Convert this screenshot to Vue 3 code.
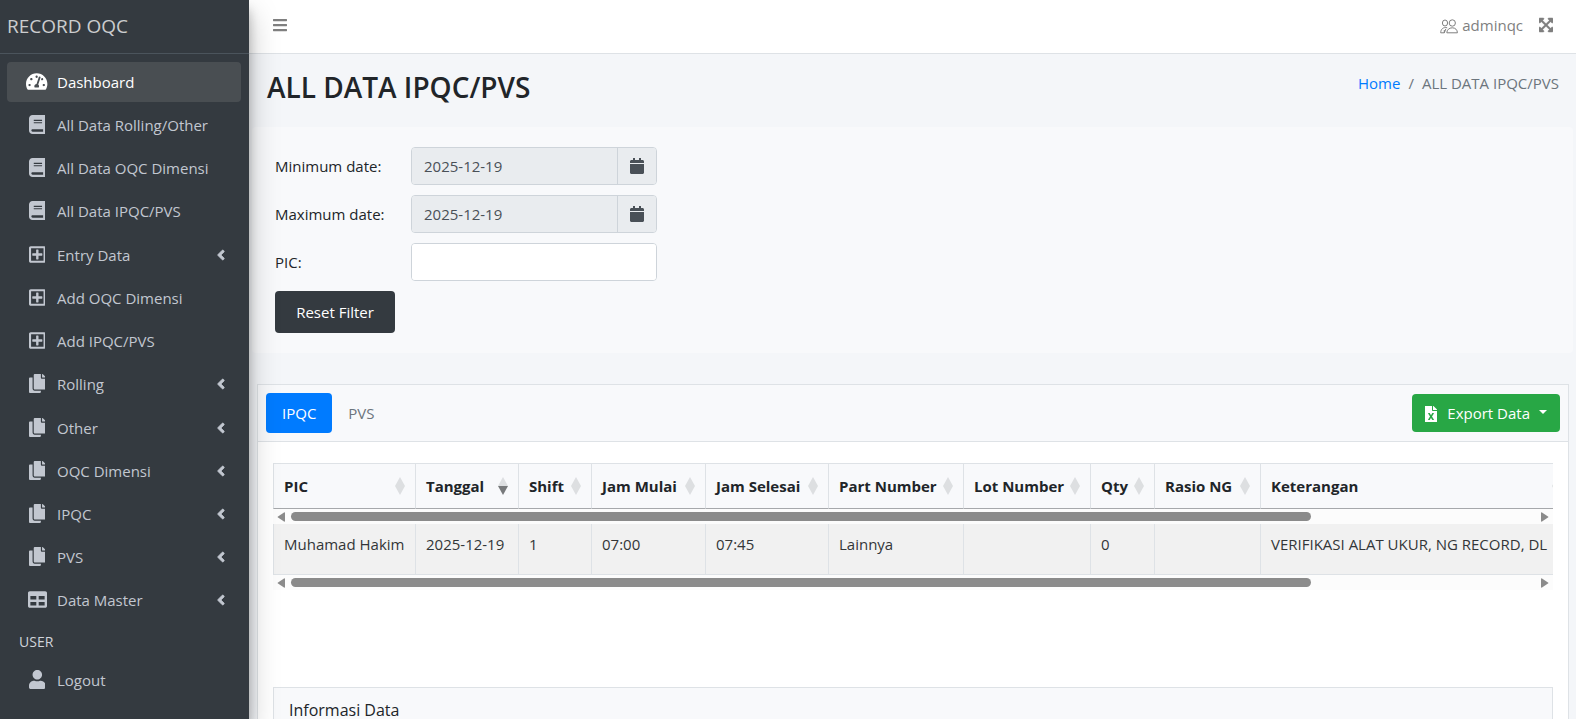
<script setup>
import { ref } from 'vue';

// Glyphs: viewBox width and path, all 512 high
const icons = {
    gauge: [576, 'M288 32C128.94 32 0 160.94 0 320c0 52.8 14.25 102.26 39.06 144.8 5.61 9.62 16.3 15.2 27.44 15.2h443c11.14 0 21.83-5.58 27.44-15.2C561.75 422.26 576 372.8 576 320c0-159.06-128.94-288-288-288zm0 64c14.71 0 26.58 10.13 30.32 23.65-1.11 2.26-2.64 4.23-3.45 6.67l-9.22 27.67c-5.13 3.49-10.97 6.01-17.64 6.01-17.67 0-32-14.33-32-32S270.33 96 288 96zM96 384c-17.67 0-32-14.33-32-32s14.33-32 32-32 32 14.33 32 32-14.33 32-32 32zm48-160c-17.67 0-32-14.33-32-32s14.33-32 32-32 32 14.33 32 32-14.33 32-32 32zm246.77-72.41l-61.33 184C343.13 347.33 352 364.54 352 384c0 11.72-3.38 22.55-8.88 32H232.88c-5.5-9.45-8.88-20.28-8.88-32 0-33.94 26.5-61.43 59.9-63.59l61.34-184.01c4.17-12.56 17.73-19.45 30.36-15.17 12.57 4.19 19.35 17.79 15.17 30.36zm14.66 57.2l15.52-46.55c3.47-1.29 7.13-2.23 11.05-2.23 17.67 0 32 14.33 32 32s-14.33 32-32 32c-11.38-.01-20.89-6.28-26.57-15.22zM480 384c-17.67 0-32-14.33-32-32s14.33-32 32-32 32 14.33 32 32-14.33 32-32 32z'],
    book: [448, 'M448 360V24c0-13.3-10.7-24-24-24H96C43 0 0 43 0 96v320c0 53 43 96 96 96h328c13.3 0 24-10.7 24-24v-16c0-7.5-3.5-14.3-8.9-18.7-4.2-15.4-4.2-59.3 0-74.7 5.4-4.3 8.9-11.1 8.9-18.6zM128 134c0-3.3 2.7-6 6-6h212c3.3 0 6 2.7 6 6v20c0 3.3-2.7 6-6 6H134c-3.3 0-6-2.7-6-6v-20zm0 64c0-3.3 2.7-6 6-6h212c3.3 0 6 2.7 6 6v20c0 3.3-2.7 6-6 6H134c-3.3 0-6-2.7-6-6v-20zm253.4 250H96c-17.7 0-32-14.3-32-32 0-17.6 14.4-32 32-32h285.4c-1.9 17.1-1.9 46.9 0 64z'],
    plus: [448, 'M360 236v40c0 6.6-5.4 12-12 12h-92v92c0 6.6-5.4 12-12 12h-40c-6.6 0-12-5.4-12-12v-92h-92c-6.6 0-12-5.4-12-12v-40c0-6.6 5.4-12 12-12h92v-92c0-6.6 5.4-12 12-12h40c6.6 0 12 5.4 12 12v92h92c6.6 0 12 5.4 12 12zM448 80v352c0 26.5-21.5 48-48 48H48c-26.5 0-48-21.5-48-48V80c0-26.5 21.5-48 48-48h352c26.5 0 48 21.5 48 48zm-56 338V94c0-3.3-2.7-6-6-6H62c-3.3 0-6 2.7-6 6v324c0 3.3 2.7 6 6 6h324c3.3 0 6-2.7 6-6z'],
    copy: [448, 'M320 448v40c0 13.255-10.745 24-24 24H24c-13.255 0-24-10.745-24-24V120c0-13.255 10.745-24 24-24h72v296c0 30.879 25.121 56 56 56h168zm0-344V0H152c-13.255 0-24 10.745-24 24v368c0 13.255 10.745 24 24 24h272c13.255 0 24-10.745 24-24V128H344c-13.2 0-24-10.8-24-24zm120.971-31.029L375.029 7.029A24 24 0 0 0 358.059 0H352v96h96v-6.059a24 24 0 0 0-7.029-16.97z'],
    table: [512, 'M464 32H48C21.49 32 0 53.49 0 80v352c0 26.51 21.49 48 48 48h416c26.51 0 48-21.49 48-48V80c0-26.51-21.49-48-48-48zM224 416H64v-96h160v96zm0-160H64v-96h160v96zm224 160H288v-96h160v96zm0-160H288v-96h160v96z'],
    user: [448, 'M224 256c70.7 0 128-57.3 128-128S294.7 0 224 0 96 57.3 96 128s57.3 128 128 128zm89.6 32h-16.7c-22.2 10.2-46.9 16-72.9 16s-50.6-5.8-72.9-16h-16.7C60.2 288 0 348.2 0 422.4V464c0 26.5 21.5 48 48 48h352c26.5 0 48-21.5 48-48v-41.6c0-74.2-60.2-134.4-134.4-134.4z'],
};

const menu = [
    [
        { label: 'Dashboard', icon: 'gauge', active: true },
        { label: 'All Data Rolling/Other', icon: 'book' },
        { label: 'All Data OQC Dimensi', icon: 'book' },
        { label: 'All Data IPQC/PVS', icon: 'book' },
    ],
    [
        { label: 'Entry Data', icon: 'plus', children: true },
        { label: 'Add OQC Dimensi', icon: 'plus' },
        { label: 'Add IPQC/PVS', icon: 'plus' },
        { label: 'Rolling', icon: 'copy', children: true },
    ],
    [
        { label: 'Other', icon: 'copy', children: true },
        { label: 'OQC Dimensi', icon: 'copy', children: true },
        { label: 'IPQC', icon: 'copy', children: true },
        { label: 'PVS', icon: 'copy', children: true },
        { label: 'Data Master', icon: 'table', children: true },
    ],
];

const columns = [
    { title: 'PIC', width: 143 },
    { title: 'Tanggal', width: 103, sorted: true },
    { title: 'Shift', width: 73 },
    { title: 'Jam Mulai', width: 114 },
    { title: 'Jam Selesai', width: 123 },
    { title: 'Part Number', width: 135 },
    { title: 'Lot Number', width: 127 },
    { title: 'Qty', width: 64 },
    { title: 'Rasio NG', width: 106 },
    { title: 'Keterangan', width: 312 },
];
const tableWidth = columns.reduce((sum, col) => sum + col.width, 0);

const rows = [
    ['Muhamad Hakim', '2025-12-19', '1', '07:00', '07:45', 'Lainnya', '', '0', '', 'VERIFIKASI ALAT UKUR, NG RECORD, DL'],
];

const minDate = ref('2025-12-19');
const maxDate = ref('2025-12-19');
const pic = ref('');
const tab = ref('IPQC');

const resetFilter = () => {
    pic.value = '';
};
</script>

<template>
    <div class="wrapper">
        <aside class="sidebar">
            <a href="#" class="brand">RECORD OQC</a>
            <nav class="menu">
                <ul v-for="(group, i) in menu" :key="i">
                    <li v-for="item in group" :key="item.label">
                        <a href="#" class="nav_item" :class="{ active: item.active }">
                            <span class="nav_icon">
                                <svg :viewBox="`0 0 ${icons[item.icon][0]} 512`"><path :d="icons[item.icon][1]" /></svg>
                            </span>
                            <span class="nav_label">{{ item.label }}</span>
                            <svg v-if="item.children" class="angle" viewBox="0 0 256 512"><path d="M31.7 239l136-136c9.4-9.4 24.6-9.4 33.9 0l22.6 22.6c9.4 9.4 9.4 24.6 0 33.9L127.9 256l96.4 96.4c9.4 9.4 9.4 24.6 0 33.9L201.7 409c-9.4 9.4-24.6 9.4-33.9 0l-136-136c-9.5-9.4-9.5-24.6-.1-34z" /></svg>
                        </a>
                    </li>
                </ul>
                <div class="nav_header">USER</div>
                <a href="#" class="nav_item">
                    <span class="nav_icon">
                        <svg viewBox="0 0 448 512"><path :d="icons.user[1]" /></svg>
                    </span>
                    <span class="nav_label">Logout</span>
                </a>
            </nav>
        </aside>

        <div class="main">
            <header class="topbar">
                <button type="button" class="icon_btn" aria-label="Toggle menu">
                    <svg class="glyph" viewBox="0 0 448 512"><path d="M16 132h416c8.837 0 16-7.163 16-16V76c0-8.837-7.163-16-16-16H16C7.163 60 0 67.163 0 76v40c0 8.837 7.163 16 16 16zm0 160h416c8.837 0 16-7.163 16-16v-40c0-8.837-7.163-16-16-16H16c-8.837 0-16 7.163-16 16v40c0 8.837 7.163 16 16 16zm0 160h416c8.837 0 16-7.163 16-16v-40c0-8.837-7.163-16-16-16H16c-8.837 0-16 7.163-16 16v40c0 8.837 7.163 16 16 16z" /></svg>
                </button>
                <div class="topbar_right">
                    <a href="#" class="account">
                        <svg class="people" viewBox="0 0 18 15">
                            <ellipse cx="5" cy="4" rx="2.6" ry="3" />
                            <ellipse cx="12.3" cy="4" rx="3.1" ry="3.2" />
                            <path d="M6.8 13.8c0-3 2.5-5 5.5-5s5.1 2 5.1 5z" />
                            <path d="M7.2 8.8C3.5 7.8.7 10 .7 13.8h3.6l1.5-3.8M4.3 13.8V11" />
                        </svg>
                        adminqc
                    </a>
                    <button type="button" class="icon_btn" aria-label="Fullscreen">
                        <svg class="glyph heavy" viewBox="0 0 448 512"><path d="M448 344v112a23.94 23.94 0 0 1-24 24H312c-21.39 0-32.09-25.9-17-41l36.2-36.2L224 295.6 116.77 402.9 153 439c15.09 15.1 4.39 41-17 41H24a23.94 23.94 0 0 1-24-24V344c0-21.4 25.89-32.1 41-17l36.19 36.2L184.46 256 77.18 148.7 41 185c-15.1 15.1-41 4.4-41-17V56a23.94 23.94 0 0 1 24-24h112c21.39 0 32.09 25.9 17 41l-36.2 36.2L224 216.4l107.23-107.3L295 73c-15.09-15.1-4.39-41 17-41h112a23.94 23.94 0 0 1 24 24v112c0 21.4-25.89 32.1-41 17l-36.19-36.2L263.54 256l107.28 107.3L407 327.1c15.1-15.2 41-4.5 41 16.9z" /></svg>
                    </button>
                </div>
            </header>

            <div class="page_head">
                <h1>ALL DATA IPQC/PVS</h1>
                <nav class="crumbs">
                    <a href="#">Home</a>
                    <span>/</span>
                    <span>ALL DATA IPQC/PVS</span>
                </nav>
            </div>

            <form class="filter" @submit.prevent>
                <label for="min">Minimum date:</label>
                <div class="group">
                    <input id="min" v-model="minDate" type="text" readonly>
                    <button type="button" aria-label="Pick minimum date">
                        <svg viewBox="0 0 448 512"><path d="M12 192h424c6.6 0 12 5.4 12 12v260c0 26.5-21.5 48-48 48H48c-26.5 0-48-21.5-48-48V204c0-6.6 5.4-12 12-12zm436-44v-36c0-26.5-21.5-48-48-48h-48V12c0-6.6-5.4-12-12-12h-40c-6.6 0-12 5.4-12 12v52H160V12c0-6.6-5.4-12-12-12h-40c-6.6 0-12 5.4-12 12v52H48C21.5 64 0 85.5 0 112v36c0 6.6 5.4 12 12 12h424c6.6 0 12-5.4 12-12z" /></svg>
                    </button>
                </div>
                <label for="max">Maximum date:</label>
                <div class="group">
                    <input id="max" v-model="maxDate" type="text" readonly>
                    <button type="button" aria-label="Pick maximum date">
                        <svg viewBox="0 0 448 512"><path d="M12 192h424c6.6 0 12 5.4 12 12v260c0 26.5-21.5 48-48 48H48c-26.5 0-48-21.5-48-48V204c0-6.6 5.4-12 12-12zm436-44v-36c0-26.5-21.5-48-48-48h-48V12c0-6.6-5.4-12-12-12h-40c-6.6 0-12 5.4-12 12v52H160V12c0-6.6-5.4-12-12-12h-40c-6.6 0-12 5.4-12 12v52H48C21.5 64 0 85.5 0 112v36c0 6.6 5.4 12 12 12h424c6.6 0 12-5.4 12-12z" /></svg>
                    </button>
                </div>
                <label for="pic">PIC:</label>
                <div class="group">
                    <input id="pic" v-model="pic" type="text">
                </div>
                <button type="button" class="reset" @click="resetFilter">Reset Filter</button>
            </form>

            <section class="card">
                <div class="card_head">
                    <div class="tabs">
                        <button v-for="name in ['IPQC', 'PVS']" :key="name" type="button" :class="{ active: tab === name }" @click="tab = name">{{ name }}</button>
                    </div>
                    <button type="button" class="export">
                        <svg viewBox="0 0 384 512"><path d="M224 136V0H0v512h384V160H248c-13.2 0-24-10.8-24-24zm60.1 106.5L224 336l60.1 93.5c5.1 8-.6 18.5-10.1 18.5h-34.9c-4.4 0-8.5-2.4-10.6-6.3C208.9 405.5 192 373 192 373c-6.4 14.8-10 20-36.6 68.8-2.1 3.9-6.1 6.3-10.5 6.3H110c-9.5 0-15.2-10.5-10.1-18.5l60.3-93.5-60.3-93.5c-5.2-8 .6-18.5 10.1-18.5h34.8c4.4 0 8.5 2.4 10.6 6.3 26.1 48.8 20 33.6 36.6 68.5 0 0 6.1-11.7 36.6-68.5 2.1-3.9 6.2-6.3 10.6-6.3H274c9.5-.1 15.2 10.4 10.1 18.4zM384 128H256V0h6.1c6.4 0 12.5 2.5 17 7l97.9 98c4.5 4.5 7 10.6 7 16.9z" /></svg>
                        Export Data
                        <span class="caret"></span>
                    </button>
                </div>

                <div class="card_body">
                    <div class="scroller">
                        <table :style="{ width: tableWidth + 'px' }">
                            <colgroup>
                                <col v-for="col in columns" :key="col.title" :style="{ width: col.width + 'px' }">
                            </colgroup>
                            <thead>
                                <tr>
                                    <th v-for="col in columns" :key="col.title" scope="col">
                                        <div class="th_inner">
                                            {{ col.title }}
                                            <svg class="sort" :class="{ sorted: col.sorted }" viewBox="0 0 10 18">
                                                <path d="M0 9 5 0l5 9z" />
                                                <path class="down" d="M0 9h10l-5 9z" />
                                            </svg>
                                        </div>
                                    </th>
                                </tr>
                            </thead>
                        </table>
                    </div>
                    <div class="scrollbar" aria-hidden="true">
                        <svg viewBox="0 0 8 10"><path d="M8 1v8q0 1-1 .5L1 5.5Q0 5 1 4.5L7 .5Q8 0 8 1z" /></svg>
                        <div class="track"><div class="thumb"></div></div>
                        <svg viewBox="0 0 8 10"><path d="M0 1v8q0 1 1 .5L7 5.5Q8 5 7 4.5L1 .5Q0 0 0 1z" /></svg>
                    </div>
                    <div class="scroller">
                        <table :style="{ width: tableWidth + 'px' }">
                            <colgroup>
                                <col v-for="col in columns" :key="col.title" :style="{ width: col.width + 'px' }">
                            </colgroup>
                            <tbody>
                                <tr v-for="(row, r) in rows" :key="r">
                                    <td v-for="(cell, c) in row" :key="c">{{ cell }}</td>
                                </tr>
                            </tbody>
                        </table>
                    </div>
                    <div class="scrollbar" aria-hidden="true">
                        <svg viewBox="0 0 8 10"><path d="M8 1v8q0 1-1 .5L1 5.5Q0 5 1 4.5L7 .5Q8 0 8 1z" /></svg>
                        <div class="track"><div class="thumb"></div></div>
                        <svg viewBox="0 0 8 10"><path d="M0 1v8q0 1 1 .5L7 5.5Q8 5 7 4.5L1 .5Q0 0 0 1z" /></svg>
                    </div>

                    <div class="info">
                        <h2>Informasi Data</h2>
                    </div>
                </div>
            </section>
        </div>
    </div>
</template>

<style>
body {
    margin: 0;
    overflow: hidden;
}
</style>

<style scoped>
.wrapper {
    display: flex;
    height: 100vh;
    overflow: hidden;
    background: #f4f6f9;
    color: #212529;
    font-family: "Open Sans", "Noto Sans", sans-serif;
    font-size: 15px;
    line-height: 24px;
}

.wrapper * {
    box-sizing: border-box;
}

a {
    text-decoration: none;
}

button,
input {
    font: inherit;
    margin: 0;
}

button {
    padding: 0;
    border: 0;
    background: none;
    cursor: pointer;
}

svg {
    display: block;
    fill: currentColor;
}

/* Sidebar */
.sidebar {
    z-index: 2;
    flex: none;
    width: 249px;
    background: #343a40;
    box-shadow: 0 14px 28px rgba(0, 0, 0, .25), 0 10px 10px rgba(0, 0, 0, .22);
}

.brand {
    display: flex;
    align-items: center;
    height: 54px;
    padding: 0 7px 2px;
    border-bottom: 1px solid #4b545c;
    color: rgba(255, 255, 255, .75);
    font-size: 19px;
}

.menu {
    padding: 8px 8px 0 7px;
}

.menu ul {
    display: grid;
    gap: 3px;
    margin: 0 0 4px;
    padding: 0;
    list-style: none;
}

.nav_item {
    display: flex;
    align-items: center;
    height: 40px;
    padding: 0 16px;
    border-radius: 4px;
    color: #c2c7d0;
}

.nav_item.active {
    background: #494e52;
    color: #fff;
}

.nav_icon {
    display: flex;
    justify-content: center;
    width: 28px;
    margin-right: 6px;
    padding-bottom: 2px;
}

.nav_icon svg {
    height: 19px;
}

.nav_label {
    flex: 1;
}

.angle {
    height: 16px;
    stroke: currentColor;
    stroke-width: 24;
}

.nav_header {
    padding: 8px 12px;
    color: #d0d4db;
    font-size: 14px;
    line-height: 20px;
}

/* Top bar */
.main {
    flex: 1;
    min-width: 0;
}

.topbar {
    display: flex;
    align-items: center;
    justify-content: space-between;
    height: 54px;
    padding: 0 23px 3px 24px;
    border-bottom: 1px solid #dee2e6;
    background: #fff;
    color: #7f7f7f;
}

.icon_btn {
    color: inherit;
}

.glyph {
    height: 16px;
}

.heavy {
    stroke: currentColor;
    stroke-width: 16;
}

.topbar_right,
.account {
    display: flex;
    align-items: center;
}

.topbar_right {
    gap: 16px;
}

.account {
    gap: 4px;
    color: inherit;
}

.people {
    width: 18px;
    height: 15px;
    margin-top: 3px;
    fill: none;
    stroke: currentColor;
}

/* Title row */
.page_head {
    display: flex;
    align-items: flex-start;
    justify-content: space-between;
    height: 73px;
    padding: 15px 17px 0 18px;
}

h1 {
    margin: 0;
    font-size: 28px;
    font-weight: 600;
    line-height: 36px;
}

.crumbs {
    display: flex;
    gap: 8px;
    padding-top: 2px;
    color: #6c757d;
}

.crumbs a {
    color: #007bff;
}

/* Filter form */
.filter {
    display: grid;
    grid-template-columns: 120px 246px;
    gap: 10px 16px;
    align-items: center;
    margin: 0 3px 31px;
    padding: 20px 23px;
    border-radius: 4px;
    background: #f8f9fb;
}

.group {
    display: flex;
    height: 38px;
    overflow: hidden;
    border: 1px solid #ced4da;
    border-radius: 4px;
}

.group input {
    flex: 1;
    min-width: 0;
    padding: 0 12px;
    border: 0;
    outline: 0;
    background: #fff;
    color: #495057;
}

.group input:read-only {
    background: #e9ecef;
}

.group button {
    display: grid;
    place-items: center;
    width: 39px;
    border-left: 1px solid #ced4da;
    background: #e9ecef;
    color: #495057;
}

.group svg {
    height: 16px;
}

.reset {
    height: 42px;
    border-radius: 4px;
    background: #343a40;
    color: #fff;
}

/* Data card */
.card {
    margin: 0 7px 0 8px;
    border: 1px solid #dee2e6;
    background: #fff;
}

.card_head {
    display: flex;
    align-items: center;
    justify-content: space-between;
    padding: 8px;
    border-bottom: 1px solid #dee2e6;
    background: #f8f9fb;
}

.tabs {
    display: flex;
}

.tabs button {
    height: 40px;
    padding: 0 16px;
    border-radius: 4px;
    color: #6c757d;
}

.tabs button.active {
    background: #007bff;
    color: #fff;
}

.export {
    display: flex;
    align-items: center;
    height: 38px;
    padding: 0 13px;
    border-radius: 4px;
    background: #28a745;
    color: #fff;
}

.export svg {
    height: 16px;
    margin: 2px 10px 0 0;
}

.caret {
    margin: 0 0 3px 9px;
    border: 4px solid transparent;
    border-top-color: #fff;
    border-bottom: 0;
}

.card_body {
    padding: 21px 15px 0;
}

.scroller {
    overflow: hidden;
}

table {
    border-collapse: separate;
    border-spacing: 0;
    table-layout: fixed;
}

th,
td {
    overflow: hidden;
    border-right: 1px solid #dee2e6;
    text-align: left;
    white-space: nowrap;
}

th:first-child,
td:first-child {
    border-left: 1px solid #dee2e6;
}

th {
    height: 46px;
    padding: 0 10px;
    border-top: 1px solid #dee2e6;
    border-bottom: 1px solid #a6a8ab;
    background: #f8f9fb;
    font-weight: 700;
}

.th_inner {
    display: flex;
    align-items: center;
    justify-content: space-between;
}

.sort {
    flex: none;
    width: 10px;
    height: 18px;
    color: #dddfe1;
}

.sorted .down {
    fill: #77797b;
}

td {
    padding: 8px 10px 18px;
    border-bottom: 1px solid #dee2e6;
    background: #f1f1f1;
    color: #333638;
}

.scrollbar {
    display: flex;
    align-items: center;
    gap: 6px;
    height: 15px;
    padding: 0 4px;
    background: #fcfcfc;
    color: #8b8b8b;
}

.scrollbar svg {
    width: 8px;
    height: 10px;
}

.track {
    flex: 1;
}

.thumb {
    width: 82%;
    height: 9px;
    border-radius: 5px;
    background: #8b8b8b;
}

.info {
    margin-top: 97px;
    padding: 10px 15px;
    border: 1px solid #dee2e6;
    background: #f8f9fb;
}

h2 {
    margin: 0;
    font-size: 16px;
    font-weight: 400;
    line-height: 24px;
}
</style>
